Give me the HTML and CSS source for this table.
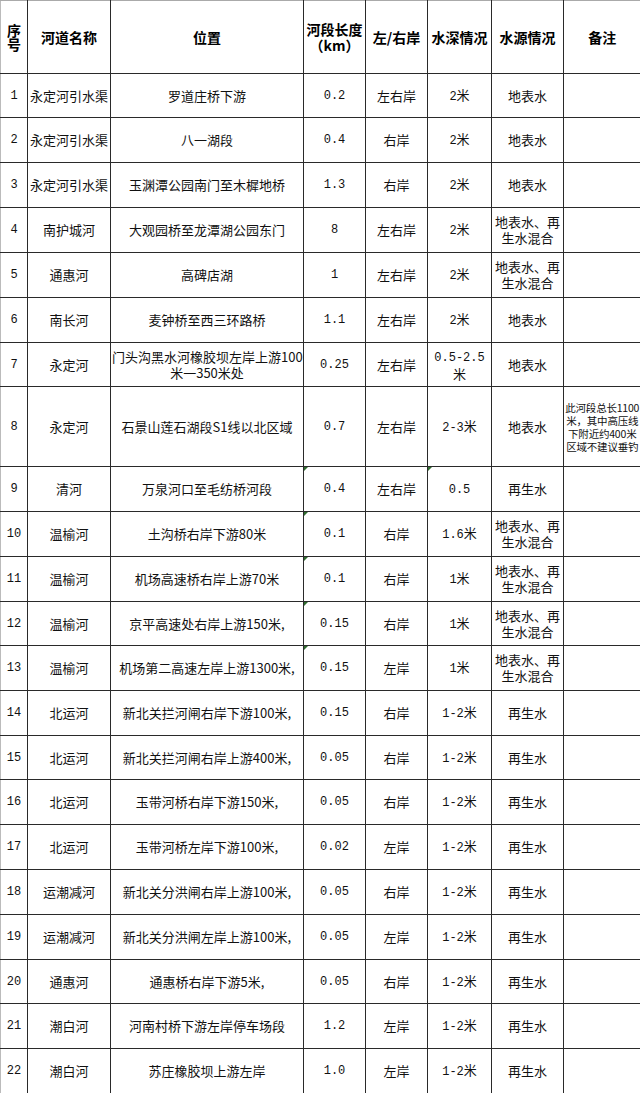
FILE: index.html
```html
<!DOCTYPE html>
<html lang="zh-CN">
<head>
<meta charset="utf-8">
<title>北京垂钓河段</title>
<link rel="stylesheet" href="styles.css">
</head>
<body>
<table class="sheet">
  <colgroup>
    <col class="c-no"><col class="c-name"><col class="c-loc"><col class="c-len">
    <col class="c-side"><col class="c-depth"><col class="c-src"><col class="c-note">
  </colgroup>
  <thead>
    <tr class="head">
      <th class="tight">序<br>号</th>
      <th>河道名称</th>
      <th>位置</th>
      <th>河段长度<br>（km）</th>
      <th>左/右岸</th>
      <th>水深情况</th>
      <th>水源情况</th>
      <th class="last">备注</th>
    </tr>
  </thead>
  <tbody>
    <tr class="h44"><td class="num">1</td><td>永定河引水渠</td><td>罗道庄桥下游</td><td class="num">0.2</td><td>左右岸</td><td><span class="d">2</span>米</td><td>地表水</td><td class="last"></td></tr>
    <tr><td class="num">2</td><td>永定河引水渠</td><td>八一湖段</td><td class="num">0.4</td><td>右岸</td><td><span class="d">2</span>米</td><td>地表水</td><td class="last"></td></tr>
    <tr><td class="num">3</td><td>永定河引水渠</td><td>玉渊潭公园南门至木樨地桥</td><td class="num">1.3</td><td>右岸</td><td><span class="d">2</span>米</td><td>地表水</td><td class="last"></td></tr>
    <tr><td class="num">4</td><td>南护城河</td><td>大观园桥至龙潭湖公园东门</td><td class="num">8</td><td>左右岸</td><td><span class="d">2</span>米</td><td>地表水、再<br>生水混合</td><td class="last"></td></tr>
    <tr><td class="num">5</td><td>通惠河</td><td>高碑店湖</td><td class="num">1</td><td>左右岸</td><td><span class="d">2</span>米</td><td>地表水、再<br>生水混合</td><td class="last"></td></tr>
    <tr><td class="num">6</td><td>南长河</td><td>麦钟桥至西三环路桥</td><td class="num">1.1</td><td>左右岸</td><td><span class="d">2</span>米</td><td>地表水</td><td class="last"></td></tr>
    <tr class="h44"><td class="num">7</td><td>永定河</td><td class="nw">门头沟黑水河橡胶坝左岸上游100<br>米一350米处</td><td class="num">0.25</td><td>左右岸</td><td><span class="d">0.5-2.5</span><br>米</td><td>地表水</td><td class="last"></td></tr>
    <tr class="h80"><td class="num">8</td><td>永定河</td><td>石景山莲石湖段S1线以北区域</td><td class="num">0.7</td><td>左右岸</td><td><span class="d">2-3</span>米</td><td>地表水</td><td class="last note">此河段总长1100<br>米，其中高压线<br>下附近约400米<br>区域不建议垂钓</td></tr>
    <tr><td class="num">9</td><td>清河</td><td>万泉河口至毛纺桥河段</td><td class="num tri">0.4</td><td>左右岸</td><td class="tri"><span class="d">0.5</span></td><td>再生水</td><td class="last"></td></tr>
    <tr><td class="num">10</td><td>温榆河</td><td>土沟桥右岸下游80米</td><td class="num tri">0.1</td><td>右岸</td><td><span class="d">1.6</span>米</td><td>地表水、再<br>生水混合</td><td class="last"></td></tr>
    <tr><td class="num">11</td><td>温榆河</td><td>机场高速桥右岸上游70米</td><td class="num tri">0.1</td><td>右岸</td><td><span class="d">1</span>米</td><td>地表水、再<br>生水混合</td><td class="last"></td></tr>
    <tr class="h44"><td class="num">12</td><td>温榆河</td><td>京平高速处右岸上游150米,</td><td class="num tri">0.15</td><td>右岸</td><td><span class="d">1</span>米</td><td>地表水、再<br>生水混合</td><td class="last"></td></tr>
    <tr><td class="num">13</td><td>温榆河</td><td>机场第二高速左岸上游1300米,</td><td class="num tri">0.15</td><td>左岸</td><td><span class="d">1</span>米</td><td>地表水、再<br>生水混合</td><td class="last"></td></tr>
    <tr><td class="num">14</td><td>北运河</td><td>新北关拦河闸右岸下游100米,</td><td class="num">0.15</td><td>右岸</td><td><span class="d">1-2</span>米</td><td>再生水</td><td class="last"></td></tr>
    <tr class="h44"><td class="num">15</td><td>北运河</td><td>新北关拦河闸右岸上游400米,</td><td class="num">0.05</td><td>右岸</td><td><span class="d">1-2</span>米</td><td>再生水</td><td class="last"></td></tr>
    <tr><td class="num">16</td><td>北运河</td><td>玉带河桥右岸下游150米,</td><td class="num">0.05</td><td>右岸</td><td><span class="d">1-2</span>米</td><td>再生水</td><td class="last"></td></tr>
    <tr><td class="num">17</td><td>北运河</td><td>玉带河桥左岸下游100米,</td><td class="num">0.02</td><td>左岸</td><td><span class="d">1-2</span>米</td><td>再生水</td><td class="last"></td></tr>
    <tr><td class="num">18</td><td>运潮减河</td><td>新北关分洪闸右岸上游100米,</td><td class="num">0.05</td><td>右岸</td><td><span class="d">1-2</span>米</td><td>再生水</td><td class="last"></td></tr>
    <tr><td class="num">19</td><td>运潮减河</td><td>新北关分洪闸左岸上游100米,</td><td class="num">0.05</td><td>左岸</td><td><span class="d">1-2</span>米</td><td>再生水</td><td class="last"></td></tr>
    <tr class="h44"><td class="num">20</td><td>通惠河</td><td>通惠桥右岸下游5米,</td><td class="num">0.05</td><td>右岸</td><td><span class="d">1-2</span>米</td><td>再生水</td><td class="last"></td></tr>
    <tr><td class="num">21</td><td>潮白河</td><td>河南村桥下游左岸停车场段</td><td class="num">1.2</td><td>左岸</td><td><span class="d">1-2</span>米</td><td>再生水</td><td class="last"></td></tr>
    <tr><td class="num">22</td><td>潮白河</td><td>苏庄橡胶坝上游左岸</td><td class="num">1.0</td><td>左岸</td><td><span class="d">1-2</span>米</td><td>再生水</td><td class="last"></td></tr>
  </tbody>
</table>
</body>
</html>
```

FILE: styles.css
```css
html, body {
  margin: 0;
  padding: 0;
  background: #fff;
  overflow: hidden;
}

.sheet {
  border-collapse: collapse;
  table-layout: fixed;
  width: 640px;
  font-family: "Noto Sans CJK SC", "Noto Sans", sans-serif;
  font-size: 13px;
  color: #111;
}

.c-no { width: 27px; }
.c-name { width: 83px; }
.c-loc { width: 193px; }
.c-len { width: 62px; }
.c-side { width: 62px; }
.c-depth { width: 64px; }
.c-src { width: 72px; }
.c-note { width: 77px; }

.sheet th,
.sheet td {
  border: 1px solid #2a2a2a;
  padding: 0 1px;
  text-align: center;
  vertical-align: middle;
  line-height: 16px;
  position: relative;
}

.sheet th {
  height: 72px;
  font-weight: 700;
  font-size: 14px;
  line-height: 16px;
  color: #000;
  border-top-color: #aaa;
}

.sheet th.tight {
  line-height: 14px;
}

.sheet th:first-child,
.sheet td:first-child {
  border-left-color: #bbb;
}

.sheet .last {
  border-right: none;
}

.sheet td {
  height: 44px;
}

.sheet tr.h44 td {
  height: 43px;
}

.sheet tr.h80 td {
  height: 79px;
}

.num,
.d {
  font-family: "Liberation Mono", "DejaVu Sans Mono", monospace;
  font-size: 12px;
}

.nw {
  white-space: nowrap;
  overflow: visible;
}

.sheet td.note {
  font-size: 10.5px;
  line-height: 13px;
  white-space: nowrap;
  letter-spacing: -0.2px;
}

.tri::before {
  content: "";
  position: absolute;
  left: 0;
  top: 0;
  width: 0;
  height: 0;
  border-top: 4px solid #2f6b2f;
  border-right: 4px solid transparent;
}
```
